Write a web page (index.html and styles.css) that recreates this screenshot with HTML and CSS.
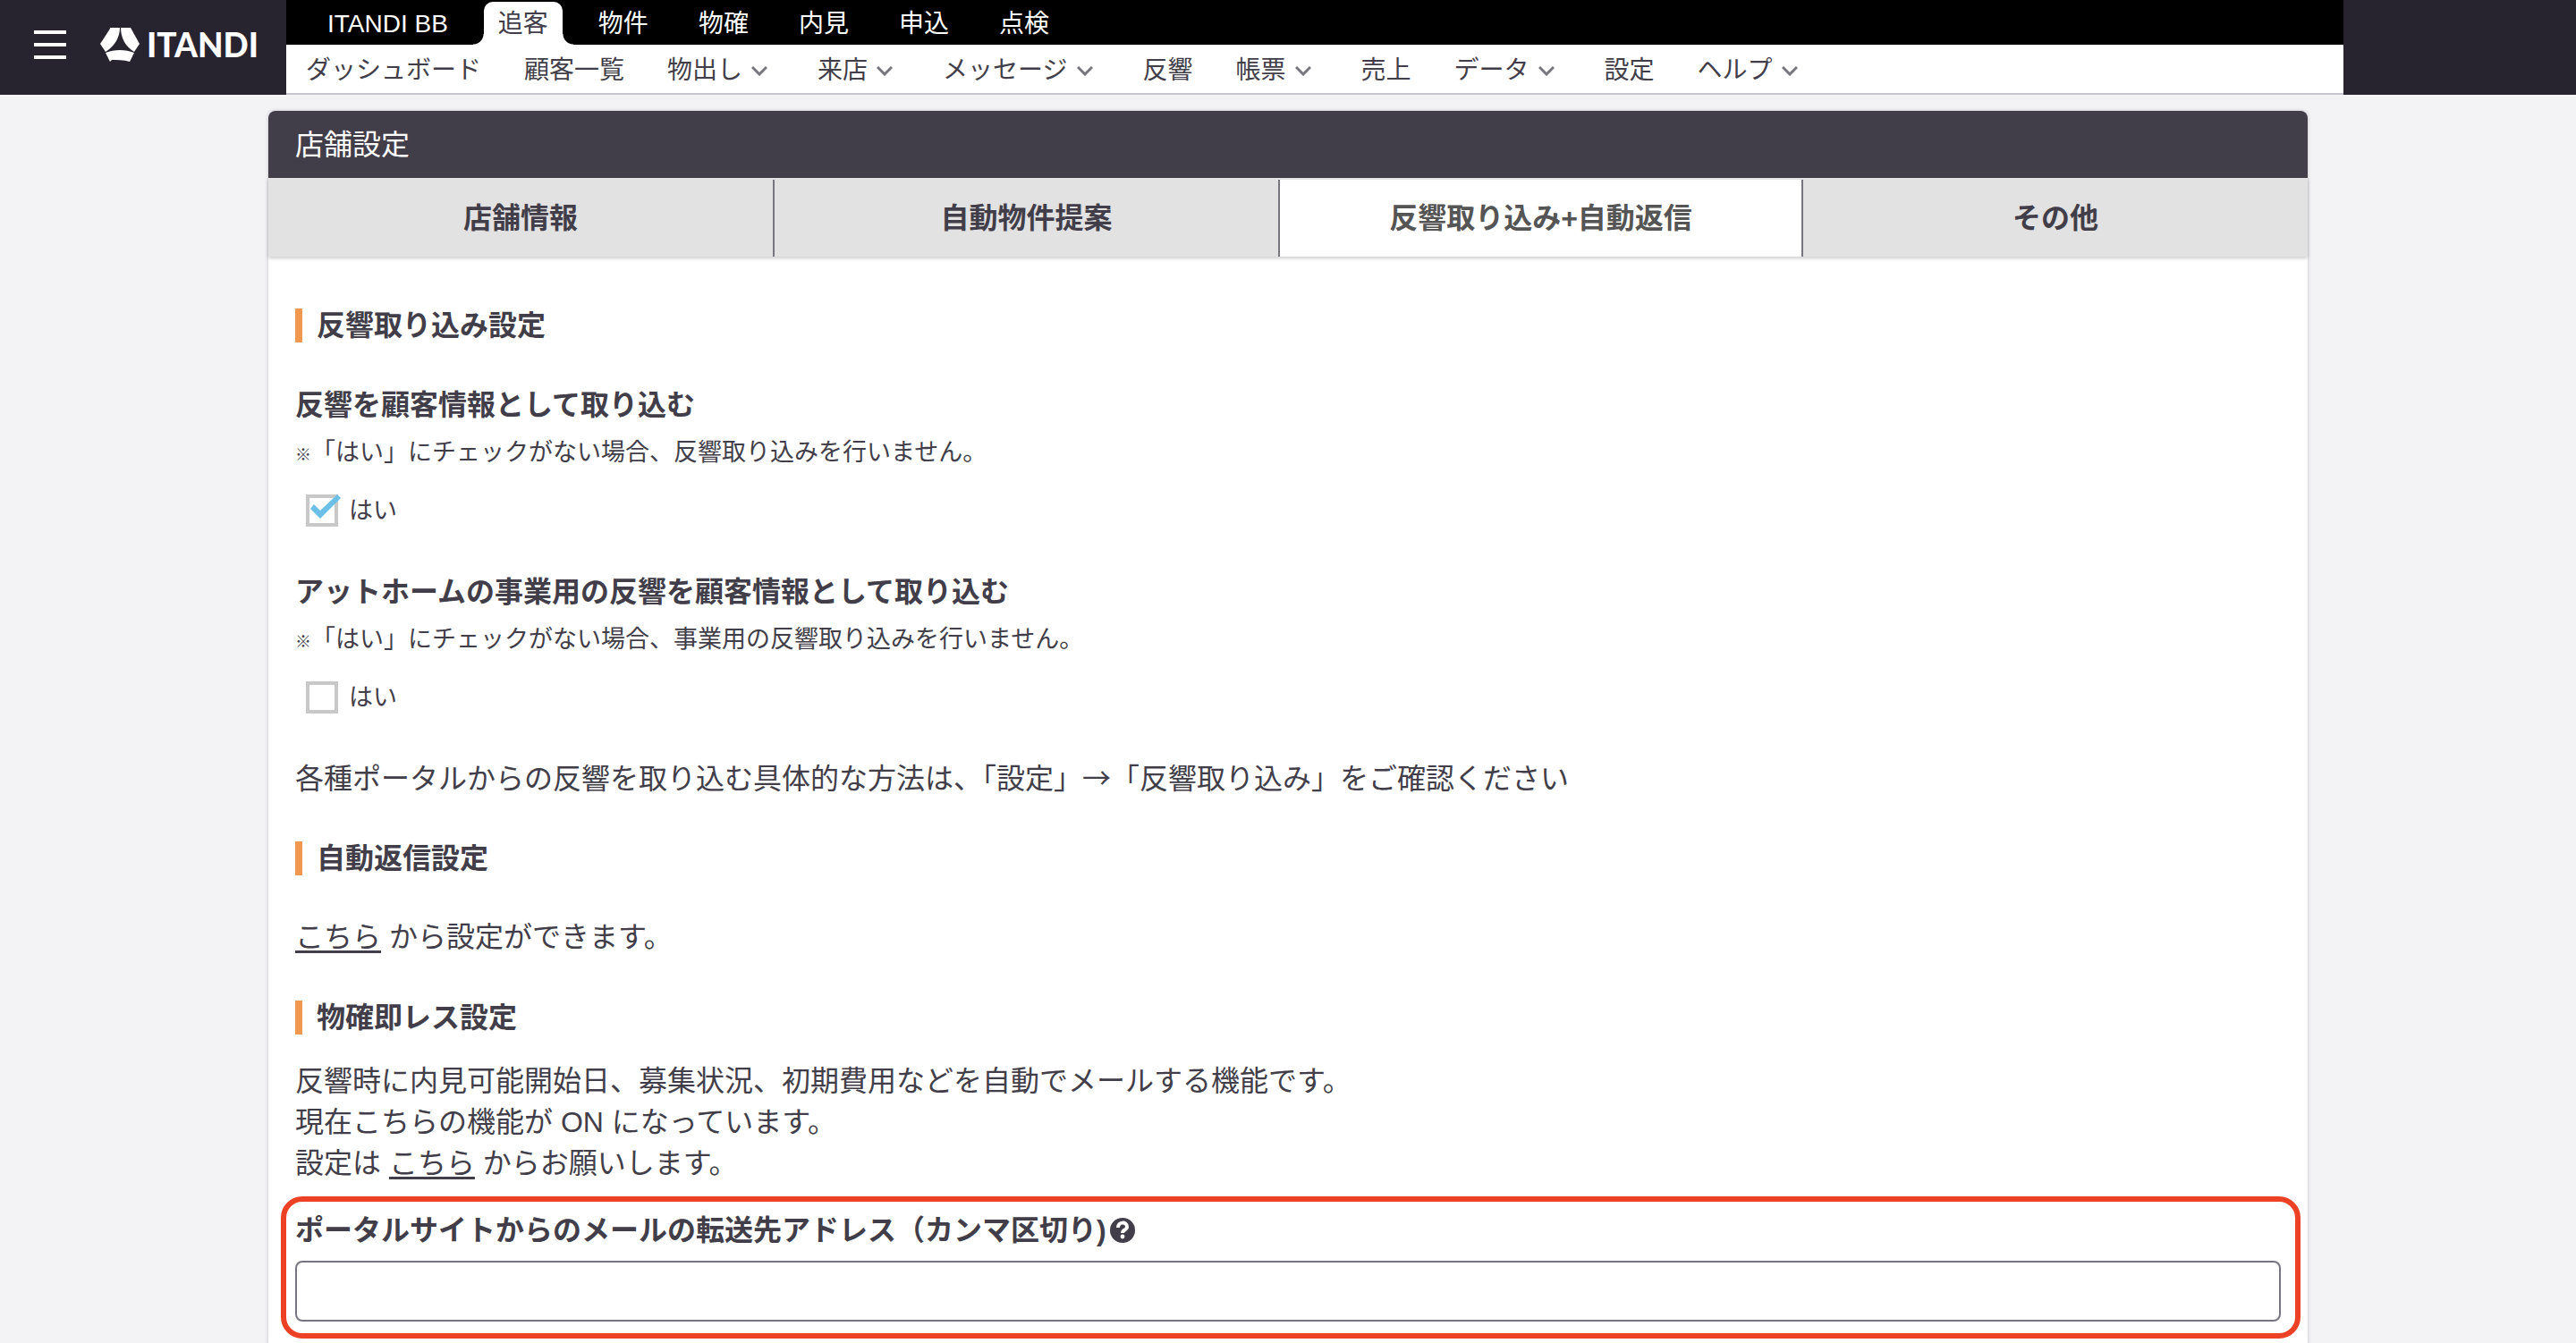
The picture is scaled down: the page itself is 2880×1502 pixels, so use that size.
FILE: index.html
```html
<!DOCTYPE html>
<html lang="ja">
<head>
  <meta charset="UTF-8">
  <title>店舗設定</title>
  <link rel="stylesheet" href="styles.css">
</head>
<body>
  <header class="header">
    <div class="brand">
      <button class="menu-button" type="button" aria-label="メニュー">
        <span></span>
        <span></span>
        <span></span>
      </button>
      <a class="logo" href="#">
        <svg width="44" height="38" viewBox="0 0 44 38" fill="#fff" aria-hidden="true">
          <path d="M11 0H22C22 10 17 20 6 27L0 18L4 12L11 1Z"/>
          <path d="M23 0H34L44 18L38 27C28 21 23 11 23 0Z"/>
          <path d="M6 28C16 24 28 24 38 28L33 38C26 36 19 36 13 36L11 38Z"/>
        </svg>
        <span class="logo-text">ITANDI</span>
      </a>
    </div>

    <div class="navs">
      <nav class="top-nav">
        <a href="#">ITANDI BB</a>
        <a href="#" class="active">追客</a>
        <a href="#">物件</a>
        <a href="#">物確</a>
        <a href="#">内見</a>
        <a href="#">申込</a>
        <a href="#">点検</a>
      </nav>
      <nav class="sub-nav">
        <a href="#">ダッシュボード</a>
        <a href="#">顧客一覧</a>
        <a href="#">物出し<svg class="chevron" viewBox="0 0 18 12"><path d="M1 2L9 10L17 2"/></svg></a>
        <a href="#">来店<svg class="chevron" viewBox="0 0 18 12"><path d="M1 2L9 10L17 2"/></svg></a>
        <a href="#">メッセージ<svg class="chevron" viewBox="0 0 18 12"><path d="M1 2L9 10L17 2"/></svg></a>
        <a href="#">反響</a>
        <a href="#">帳票<svg class="chevron" viewBox="0 0 18 12"><path d="M1 2L9 10L17 2"/></svg></a>
        <a href="#">売上</a>
        <a href="#">データ<svg class="chevron" viewBox="0 0 18 12"><path d="M1 2L9 10L17 2"/></svg></a>
        <a href="#">設定</a>
        <a href="#">ヘルプ<svg class="chevron" viewBox="0 0 18 12"><path d="M1 2L9 10L17 2"/></svg></a>
      </nav>
    </div>
  </header>

  <main class="panel">
    <h1 class="panel-title">店舗設定</h1>

    <nav class="tabs">
      <a href="#">店舗情報</a>
      <a href="#">自動物件提案</a>
      <a href="#" class="active">反響取り込み+自動返信</a>
      <a href="#">その他</a>
    </nav>

    <div class="content">
      <h2>反響取り込み設定</h2>

      <h3>反響を顧客情報として取り込む</h3>
      <p class="note"><span class="mark">※</span>「はい」にチェックがない場合、反響取り込みを行いません。</p>
      <label class="check"><input type="checkbox" checked>はい</label>

      <h3>アットホームの事業用の反響を顧客情報として取り込む</h3>
      <p class="note"><span class="mark">※</span>「はい」にチェックがない場合、事業用の反響取り込みを行いません。</p>
      <label class="check"><input type="checkbox">はい</label>

      <p class="guide">各種ポータルからの反響を取り込む具体的な方法は、「設定」<span class="arrow">→</span>「反響取り込み」をご確認ください</p>

      <h2>自動返信設定</h2>
      <p class="link-text"><a href="#">こちら</a> から設定ができます。</p>

      <h2>物確即レス設定</h2>
      <p class="description">
        反響時に内見可能開始日、募集状況、初期費用などを自動でメールする機能です。<br>
        現在こちらの機能が ON になっています。<br>
        設定は <a href="#">こちら</a> からお願いします。
      </p>

      <div class="forward">
        <label for="forward-address">
          ポータルサイトからのメールの転送先アドレス（カンマ区切り)
          <svg width="28" height="28" viewBox="0 0 28 28" aria-hidden="true">
            <circle cx="14" cy="14" r="14" fill="#423e49"/>
            <path d="M9 11C9 4 19 4 19 10C19 14 14 13 14 17" fill="none" stroke="#fff" stroke-width="4"/>
            <circle cx="14" cy="21" r="2.4" fill="#fff"/>
          </svg>
        </label>
        <input type="text" id="forward-address">
      </div>
    </div>
  </main>
</body>
</html>
```
FILE: styles.css
```css
* {
  box-sizing: border-box;
}
body {
  margin: 0;
  background: #f3f3f6;
  color: #423e49;
  font-family: "Liberation Sans", "Noto Sans CJK JP", sans-serif;
  font-size: 32px;
  line-height: 46px;
}
h1, h2, h3, p {
  margin: 0;
}
a {
  color: inherit;
}

/* header */
.header {
  display: flex;
  height: 106px;
  background: #28242f;
}
.brand {
  display: flex;
  align-items: center;
  flex: 0 0 320px;
  padding: 0 0 6px 38px;
}
.menu-button {
  display: flex;
  flex-direction: column;
  gap: 10px;
  width: 36px;
  padding: 0;
  border: none;
  background: none;
  cursor: pointer;
}
.menu-button span {
  height: 4px;
  background: #fff;
}
.logo {
  display: flex;
  align-items: center;
  gap: 8px;
  margin-left: 38px;
  color: #fff;
  text-decoration: none;
}
.logo-text {
  font-family: Lato, "Liberation Sans", sans-serif;
  font-size: 37px;
  font-weight: 900;
  line-height: 38px;
}
.navs {
  flex: 1;
  max-width: 2300px;
  font-size: 28px;
}
.navs a {
  text-decoration: none;
  white-space: nowrap;
}
.top-nav {
  display: flex;
  gap: 24px;
  height: 50px;
  padding: 2px 30px 0;
  background: #000;
  color: #fff;
}
.top-nav a {
  position: relative;
  padding: 0 16px;
  line-height: 50px;
}
.top-nav .active {
  background: #fff;
  color: #423e49;
  border-radius: 10px 10px 0 0;
}
.top-nav .active::before,
.top-nav .active::after {
  content: "";
  position: absolute;
  bottom: 0;
  width: 12px;
  height: 12px;
}
.top-nav .active::before {
  right: 100%;
  background: radial-gradient(circle at 0 0, #000 11px, #fff 12px);
}
.top-nav .active::after {
  left: 100%;
  background: radial-gradient(circle at 100% 0, #000 11px, #fff 12px);
}
.sub-nav {
  display: flex;
  gap: 48px;
  height: 56px;
  padding: 4px 22px 0;
  background: #fff;
  border-bottom: 2px solid #c6c5cb;
}
.sub-nav a {
  display: flex;
  align-items: center;
}
.chevron {
  width: 18px;
  height: 12px;
  margin: 0 8px 0 10px;
  fill: none;
  stroke: #77757d;
  stroke-width: 3;
}

/* settings panel */
.panel {
  max-width: 2280px;
  margin: 18px auto 0;
  background: #fff;
  border-radius: 8px 8px 0 0;
  box-shadow: 0 0 4px rgba(0, 0, 0, 0.2);
}
.panel-title {
  padding: 15px 30px 14px;
  background: #423e49;
  border-radius: 8px 8px 0 0;
  color: #fff;
  font-size: 32px;
  font-weight: normal;
}
.tabs {
  display: grid;
  grid-template-columns: 566fr 565fr 585fr 564fr;
  padding-top: 2px;
  background: #e2e2e2;
  box-shadow: 0 2px 4px rgba(0, 0, 0, 0.2);
}
.tabs a {
  padding: 20px 0;
  border-right: 2px solid #77757d;
  font-weight: bold;
  text-align: center;
  text-decoration: none;
}
.tabs a:last-child {
  border-right: none;
}
.tabs .active {
  background: #fff;
  color: #555;
}
.content {
  padding: 58px 30px 7px;
}
h2 {
  padding-left: 16px;
  border-left: 8px solid #f0984f;
  font-size: 32px;
  line-height: 38px;
}
h3 {
  margin-top: 47px;
  font-size: 32px;
}
.note {
  margin-top: 10px;
  font-size: 27px;
  line-height: 40px;
}
.mark {
  font-size: 18px;
  font-weight: bold;
  line-height: 1;
}
.arrow {
  font-family: "Noto Sans CJK JP", sans-serif;
  line-height: 1;
}
.check {
  display: flex;
  align-items: center;
  gap: 12px;
  width: fit-content;
  margin: 27px 0 50px 12px;
  font-size: 27px;
  line-height: 36px;
}
.check input {
  appearance: none;
  position: relative;
  width: 36px;
  height: 36px;
  margin: 0;
  border: 4px solid #c8c8c8;
  background: #fff;
}
.check input:checked::after {
  content: "";
  position: absolute;
  top: -4px;
  left: 0;
  width: 36px;
  height: 28px;
  background: #6cbfe6;
  clip-path: polygon(1px 16px, 5px 11px, 12px 18px, 31px 0, 35px 4px, 12px 27px);
}
.check + h3 {
  margin-top: 0;
}
.guide {
  margin-bottom: 47px;
}
.link-text {
  margin: 46px 0 48px;
}
.content p a {
  text-decoration-thickness: 3px;
  text-underline-offset: 4px;
}
.description {
  margin-top: 29px;
}

/* forwarding address */
.forward {
  margin: 14px -22px 0 -16px;
  padding: 9px 16px 13px 10px;
  border: 6px solid #ec4125;
  border-radius: 24px;
}
.forward label {
  display: flex;
  align-items: center;
  gap: 4px;
  margin-bottom: 11px;
  font-weight: bold;
}
.forward input {
  display: block;
  width: 100%;
  height: 68px;
  padding: 0 16px;
  border: 2px solid #77757d;
  border-radius: 8px;
  background: #fff;
  color: inherit;
  font: inherit;
}
```
